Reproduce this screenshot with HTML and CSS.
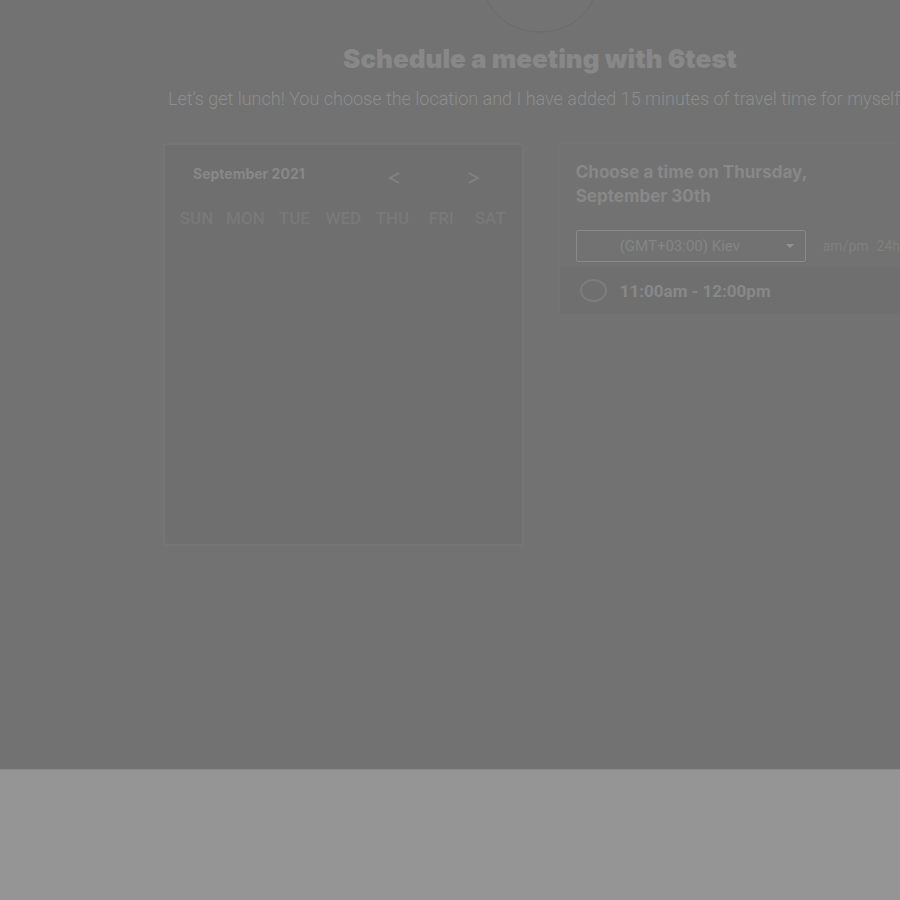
FILE: index.html
```html
<!DOCTYPE html>
<html lang="en">
<head>
<meta charset="utf-8">
<title>Schedule a meeting</title>
<link rel="stylesheet" href="styles.css">
</head>
<body>
<main class="page">
  <header class="intro">
    <svg class="avatar" viewBox="0 0 120 34" aria-hidden="true"><ellipse cx="60" cy="-16" rx="56" ry="48"/></svg>
    <h1 class="title">Schedule a meeting with 6test</h1>
    <p class="subtitle">Let’s get lunch! You choose the location and I have added 15 minutes of travel time for myself</p>
  </header>
  <div class="columns">
    <section class="calendar">
      <div class="month">
        <h2 class="month-name">September 2021</h2>
        <button class="arrow" type="button" aria-label="Previous month"><svg viewBox="0 0 12 14"><path d="M11 2 2 7l9 5"/></svg></button>
        <button class="arrow next" type="button" aria-label="Next month"><svg viewBox="0 0 12 14"><path d="m1 2 9 5-9 5"/></svg></button>
      </div>
      <div class="weekdays"><span>SUN</span><span>MON</span><span>TUE</span><span>WED</span><span>THU</span><span>FRI</span><span>SAT</span></div>
    </section>
    <section class="times">
      <h2 class="times-title">Choose a time on Thursday, September 30th</h2>
      <div class="options">
        <div class="zone">
          <select class="zone-select" aria-label="Time zone"><option>(GMT+03:00) Kiev</option></select>
          <svg class="caret" viewBox="0 0 8 4" aria-hidden="true"><path d="M0 0h8L4 4z"/></svg>
        </div>
        <div class="formats"><button type="button">am/pm</button><button type="button">24h</button></div>
      </div>
      <label class="slot"><input class="radio" type="radio" name="slot"><span>11:00am - 12:00pm</span></label>
    </section>
  </div>
</main>
<footer class="footer"></footer>
</body>
</html>
```
FILE: styles.css
```css
* { box-sizing: border-box; }
body {
  margin: 0;
  min-height: 100vh;
  display: flex;
  flex-direction: column;
  overflow: hidden;
  background: #959595;
  color: #888888;
  font-family: Inter, "Liberation Sans", sans-serif;
}
.page {
  flex: 1;
  background: #727272;
}
.footer {
  height: 131px;
  border-top: 1px solid #8a8a8a;
}
.intro {
  display: flex;
  flex-direction: column;
  align-items: center;
  width: 120%;
}
.avatar {
  display: block;
  width: 120px;
  height: 34px;
  fill: #737373;
  stroke: #6b6b6b;
}
.title {
  margin: 8px 0 0;
  font-size: 26px;
  line-height: 34px;
  font-weight: 900;
}
.subtitle {
  margin: 11px 0 0;
  padding-right: 12px;
  font: 300 18px/24px Roboto, sans-serif;
  white-space: nowrap;
  color: #8d8d8d;
}
.columns {
  display: flex;
  align-items: flex-start;
  gap: 35px;
  padding: 32px 0 0 163px;
}
.calendar {
  width: 361px;
  min-height: 403px;
  padding: 18px 7px;
  border: 2px solid #757575;
  border-radius: 4px;
  background: #6f6f6f;
}
.month {
  display: flex;
  align-items: center;
  padding: 0 35px 0 21px;
}
.month-name {
  flex: 1;
  margin: 0;
  font-size: 14px;
  line-height: 20px;
  font-weight: 700;
}
.arrow {
  display: block;
  padding: 8px 0 0;
  border: 0;
  background: none;
}
.arrow svg {
  display: block;
  width: 12px;
  height: 14px;
  fill: none;
  stroke: #828282;
  stroke-width: 2;
}
.next { margin-left: 68px; }
.weekdays {
  display: grid;
  grid-template-columns: repeat(7, 1fr);
  margin-top: 21px;
  text-align: center;
  font: 500 17px/24px Roboto, sans-serif;
  color: #797979;
}
.times {
  flex: 1;
  border: 1px solid #747474;
  border-right: 0;
}
.times-title {
  max-width: 280px;
  margin: 16px 0 0 16px;
  font-size: 17px;
  line-height: 24px;
  font-weight: 700;
}
.options {
  display: flex;
  align-items: center;
  gap: 17px;
  padding: 22px 0 5px 16px;
}
.zone {
  display: flex;
  flex: none;
  align-items: center;
  width: 230px;
  height: 32px;
  padding-right: 11px;
  border: 1px solid #8a8a8a;
  border-radius: 2px;
}
.zone-select {
  flex: 1;
  height: 28px;
  padding: 0 0 0 43px;
  border: 0;
  background: none;
  appearance: none;
  color: #858585;
  font: 15px/20px Roboto, sans-serif;
}
.caret {
  width: 8px;
  height: 4px;
  fill: #929292;
}
.formats {
  display: flex;
  gap: 8px;
}
.formats button {
  padding: 0;
  border: 0;
  background: none;
  color: #808080;
  font: 14px/20px Roboto, sans-serif;
}
.slot {
  display: flex;
  align-items: center;
  gap: 13px;
  height: 47px;
  padding-left: 20px;
  background: #6f6f6f;
  font: 700 17px/24px Roboto, sans-serif;
}
.radio {
  width: 27px;
  height: 23px;
  margin: 0;
  appearance: none;
  border: 2px solid #7c7c7c;
  border-radius: 50%;
}
```
